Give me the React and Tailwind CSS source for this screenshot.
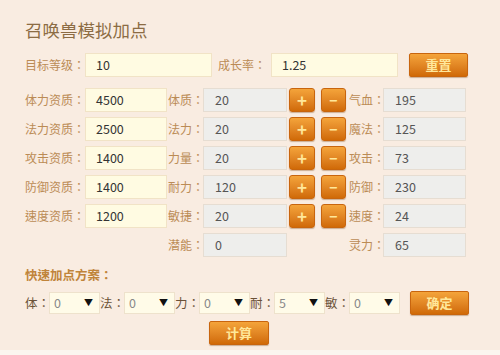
import React from "react";

const font = { fontFamily: '"Noto Sans CJK TC", "Noto Sans CJK SC", "Noto Sans", sans-serif' };

function YInput({ w, value }) {
  return (
    <div
      className={`${w} h-[24px] bg-[#fffbe2] border border-[#f1e3c6] flex items-center pl-[10px] text-[12.5px] text-[#333]`}
    >
      {value}
    </div>
  );
}

function GInput({ w, value }) {
  return (
    <div
      className={`${w} h-[24px] bg-[#eeeeec] border border-[#e6ddd2] flex items-center pl-[11px] text-[12.5px] text-[#555]`}
    >
      {value}
    </div>
  );
}

function Label({ w, children, className = "" }) {
  return (
    <div className={`${w} shrink-0 text-[12px] text-[#bb8b55] leading-[24px] whitespace-nowrap ${className}`}>
      {children}
    </div>
  );
}

function OBtn({ w, h, children, className = "" }) {
  return (
    <div
      className={`${w} ${h} shrink-0 rounded-[2px] border border-[#c8650e] bg-gradient-to-b from-[#f4a43a] to-[#d06a06] flex items-center justify-center text-[#ffe79a] font-bold shadow-[0_1px_1px_rgba(120,60,0,0.35)] ${className}`}
    >
      {children}
    </div>
  );
}

function StatRow({ l1, v1, l2, v2, l3, v3, buttons = true }) {
  return (
    <div className="flex items-center h-[24px]">
      {l1 ? <Label w="w-[60px]">{l1}</Label> : <div className="w-[60px]" />}
      {l1 ? <YInput w="w-[82px]" value={v1} /> : <div className="w-[82px]" />}
      <Label w="w-[36px]" className="pl-[1px]">{l2}</Label>
      <GInput w="w-[84px]" value={v2} />
      {buttons ? (
        <div className="flex ml-[2px] gap-[6px]">
          <OBtn w="w-[26px]" h="h-[24px]" className="text-[17px] rounded-[3px]">+</OBtn>
          <OBtn w="w-[25px]" h="h-[24px]" className="text-[14px] rounded-[3px]">−</OBtn>
        </div>
      ) : (
        <div className="w-[59px]" />
      )}
      <Label w="w-[37px]" className="pl-[3px]">{l3}</Label>
      <GInput w="w-[83px]" value={v3} />
    </div>
  );
}

function Sel({ label, value }) {
  return (
    <div className="flex items-center">
      <div className="w-[24px] text-[12.5px] text-[#6b5238] leading-[22px] whitespace-nowrap">{label}</div>
      <div className="w-[51px] h-[22px] bg-[#fffbe8] border border-[#eee2cc] flex items-center justify-between pl-[4px] pr-[6px] text-[12.5px] text-[#888]">
        <span>{value}</span>
        <span className="text-[9px] text-[#111]">▼</span>
      </div>
    </div>
  );
}

export default function App() {
  const rows = [
    ["体力资质：", "4500", "体质：", "20", "气血：", "195"],
    ["法力资质：", "2500", "法力：", "20", "魔法：", "125"],
    ["攻击资质：", "1400", "力量：", "20", "攻击：", "73"],
    ["防御资质：", "1400", "耐力：", "120", "防御：", "230"],
    ["速度资质：", "1200", "敏捷：", "20", "速度：", "24"],
  ];
  return (
    <div style={font} className="w-[500px] h-[355px] bg-[#fbf5ef] overflow-hidden">
      <div className="h-[350px] bg-[#f9ece1] pl-[25px]">
        <div className="pt-[20px] h-[40px] text-[17.5px] leading-[20px] text-[#8c6c44]">召唤兽模拟加点</div>
        <div className="mt-[13px] flex items-center h-[24px]">
          <Label w="w-[60px]">目标等级：</Label>
          <YInput w="w-[127px]" value="10" />
          <Label w="w-[59px]" className="pl-[6px]">成长率：</Label>
          <YInput w="w-[127px]" value="1.25" />
          <OBtn w="w-[59px]" h="h-[24px]" className="ml-[11px] text-[13px]">重置</OBtn>
        </div>
        <div className="mt-[11px] flex flex-col gap-[5px]">
          {rows.map((r) => (
            <StatRow key={r[0]} l1={r[0]} v1={r[1]} l2={r[2]} v2={r[3]} l3={r[4]} v3={r[5]} />
          ))}
          <StatRow l2="潜能：" v2="0" l3="灵力：" v3="65" buttons={false} />
        </div>
        <div className="mt-[11px] h-[14px] text-[12.5px] leading-[14px] font-bold text-[#c0843a]">快速加点方案：</div>
        <div className="mt-[9px] flex items-center h-[24px]">
          <Sel label="体：" value="0" />
          <Sel label="法：" value="0" />
          <Sel label="力：" value="0" />
          <Sel label="耐：" value="5" />
          <Sel label="敏：" value="0" />
          <OBtn w="w-[59px]" h="h-[24px]" className="ml-[10px] text-[13px]">确定</OBtn>
        </div>
        <div className="mt-[6px] flex pl-[184px]">
          <OBtn w="w-[60px]" h="h-[24px]" className="text-[13px]">计算</OBtn>
        </div>
      </div>
    </div>
  );
}
